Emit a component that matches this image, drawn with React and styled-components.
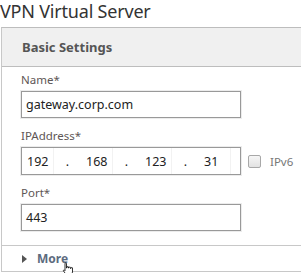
import React from 'react';
import styled, {createGlobalStyle} from 'styled-components';

const GlobalStyle = createGlobalStyle`
    html, body {
        margin:0;
        padding:0;
        background:#fff;
        font-family:"Noto Sans", "Open Sans", sans-serif;
    }
`

const Page = styled.div`
    width:301px;
    height:273px;
    overflow:hidden;
    position:relative;
`

const Title = styled.h1`
    margin:0;
    height:27px;
    font-size:18px;
    line-height:23px;
    font-weight:400;
    color:#333;
    letter-spacing:-0.2px;
`

const Panel = styled.section`
    margin-left:1px;
    border-top:1px solid #bdbdbd;
    border-left:1px solid #c8c8c8;
`

const PanelHeader = styled.div`
    height:38px;
    display:flex;
    align-items:center;
    padding-left:20px;
    background:#f0f0f0;
    border-bottom:1px solid #bdbdbd;
    font-size:13px;
    font-weight:700;
    color:#555;
`

const Body = styled.div`
    padding:5px 0 14px 19px;
`

const Field = styled.div`
    margin-bottom:${p => p.last ? 0 : 10}px;
`

const Label = styled.div`
    font-size:11.5px;
    line-height:16px;
    color:#5e5655;
    margin-bottom:3px;
`

const Row = styled.div`
    display:flex;
    align-items:center;
`

const Box = styled.div`
    width:220px;
    height:${p => p.tall ? 28 : 27}px;
    box-sizing:border-box;
    border:1px solid #999;
    box-shadow:0 0 0 1px #ececec;
    display:flex;
    align-items:center;
    padding-left:${p => p.flush ? 0 : 4}px;
    font-size:12.5px;
    color:#222;
`

const Octet = styled.span`
    width:32px;
    height:100%;
    box-sizing:border-box;
    padding-left:5px;
    display:flex;
    align-items:center;
    border-right:1px solid #f2f2f2;
`

const Dot = styled.span`
    width:27px;
    text-align:center;
`

const Check = styled.span`
    width:13px;
    height:13px;
    margin-left:7px;
    box-sizing:border-box;
    border:1px solid #a8a8a8;
    border-radius:2px;
    background:linear-gradient(#f6f6f6, #e2e2e2);
`

const CheckLabel = styled.span`
    margin-left:9px;
    font-size:11.5px;
    color:#777;
`

const MoreRow = styled.div`
    height:25px;
    border-top:1px solid #c8c8c8;
    border-bottom:1px solid #c8c8c8;
    display:flex;
    align-items:center;
    padding-left:20px;
    font-size:12px;
    font-weight:700;
    color:#5d6b7e;
`

const Arrow = styled.span`
    width:0;
    height:0;
    border-top:4px solid transparent;
    border-bottom:4px solid transparent;
    border-left:5px solid #555;
    margin-right:10px;
`

const Cursor = styled.svg`
    position:absolute;
    left:62px;
    top:262px;
`

const octets = ['192', '168', '123', '31'];

const App = () => {
    return (
        <Page>
            <GlobalStyle />
            <Title>VPN Virtual Server</Title>
            <Panel>
                <PanelHeader>Basic Settings</PanelHeader>
                <Body>
                    <Field>
                        <Label>Name*</Label>
                        <Box>gateway.corp.com</Box>
                    </Field>
                    <Field>
                        <Label>IPAddress*</Label>
                        <Row>
                            <Box tall flush>
                                {octets.map((o, i) => (
                                    <React.Fragment key={i}>
                                        <Octet>{o}</Octet>
                                        {i < 3 && <Dot>.</Dot>}
                                    </React.Fragment>
                                ))}
                            </Box>
                            <Check />
                            <CheckLabel>IPv6</CheckLabel>
                        </Row>
                    </Field>
                    <Field last>
                        <Label>Port*</Label>
                        <Box>443</Box>
                    </Field>
                </Body>
                <MoreRow>
                    <Arrow />
                    More
                </MoreRow>
            </Panel>
            <Cursor width="14" height="14" viewBox="0 0 14 14">
                <path d="M3 1.5 C3 0.8 4.5 0.8 4.5 1.5 V6 H5 V5 C5 4.3 6.5 4.3 6.5 5 V6 H7 V5.5 C7 4.8 8.5 4.8 8.5 5.5 V6.5 H9 V6 C9 5.3 10.5 5.3 10.5 6 V10 L9.5 13 H4.5 L1.5 9 C1 8.3 2 7.5 2.6 8.2 L3 8.7 Z" fill="#fff" stroke="#000" strokeWidth="0.8" />
            </Cursor>
        </Page>
    )
}

export default App;
